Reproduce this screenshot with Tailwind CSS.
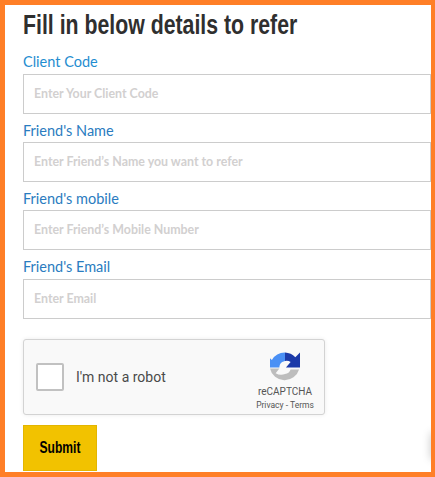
<!DOCTYPE html>
<html lang="en">
<head>
  <meta charset="UTF-8" />
  <title>Refer a friend</title>
  <script src="https://cdn.jsdelivr.net/npm/@tailwindcss/browser@4"></script>
</head>
<body class="bg-white">
  <div class="w-[435px] h-[477px] overflow-hidden border-[5px] border-r-[4px] border-[#ff7f27] bg-white pl-[18px] relative font-['Lato',sans-serif]">
    <h2 class="h-[43px] pt-[3px] whitespace-nowrap origin-left scale-x-[0.76] text-[28px] leading-[34px] font-bold text-[#2f2f2f] font-['Liberation_Sans',sans-serif]">Fill in below details to refer</h2>

    <form>
      <label class="block h-[26px] pt-[4px] text-[14.5px] leading-[20px] text-[#1f8dd0]">Client Code</label>
      <input type="text" placeholder="Enter Your Client Code" class="block w-[408px] h-[40px] border border-[#cccccc] px-[10px] pb-[2px] text-[12.4px] font-bold placeholder:text-[#d2d0d0] outline-none" />

      <label class="block h-[28px] pt-[7px] text-[14.5px] leading-[20px] text-[#2a7cc0]">Friend's Name</label>
      <input type="text" placeholder="Enter Friend’s Name you want to refer" class="block w-[408px] h-[40px] border border-[#cccccc] px-[10px] pb-[2px] text-[12.4px] font-bold placeholder:text-[#d2d0d0] outline-none" />

      <label class="block h-[28px] pt-[7px] text-[14.5px] leading-[20px] text-[#2a7cc0]">Friend's mobile</label>
      <input type="text" placeholder="Enter Friend’s Mobile Number" class="block w-[408px] h-[40px] border border-[#cccccc] px-[10px] pb-[2px] text-[12.4px] font-bold placeholder:text-[#d2d0d0] outline-none" />

      <label class="block h-[29px] pt-[7px] text-[14.5px] leading-[20px] text-[#2a7cc0]">Friend's Email</label>
      <input type="text" placeholder="Enter Email" class="block w-[408px] h-[40px] border border-[#cccccc] px-[10px] pb-[2px] text-[12.4px] font-bold placeholder:text-[#d2d0d0] outline-none" />

      <!-- recaptcha -->
      <div class="mt-[20px] w-[302px] h-[76px] flex items-center rounded-[3px] border border-[#d3d3d3] bg-[#f9f9f9] shadow-[0_0_4px_rgba(0,0,0,0.08)] font-['Roboto',sans-serif]">
        <div class="ml-[12px] w-[28px] h-[28px] rounded-[2px] border-2 border-[#c1c1c1] bg-white"></div>
        <span class="ml-[12px] text-[14px] text-[#4a4a4a]">I'm not a robot</span>
        <div class="ml-auto mr-[9px] w-[60px] flex flex-col items-center pt-[8px]">
          <svg width="30" height="31" viewBox="0 0 32 32">
            <path d="M16 0 A16 16 0 0 0 2 8 L0 6 L0 16 L10 16 A7 7 0 0 1 13 10 L16 9 Z" fill="#4a90f5" />
            <path d="M16 0 A16 16 0 0 1 27 5 L32 0 L32 16 L17 16 L22 10 A8 8 0 0 0 16 9 Z" fill="#1c3aa9" />
            <path d="M0 17 L10 17 L6 22 A11 11 0 0 0 16 23 A8 8 0 0 0 22 18 L31 18 A16 16 0 0 1 0 17 Z" fill="#bdbdbd" />
          </svg>
          <span class="mt-[2px] text-[10px] leading-[13px] text-[#555555]">reCAPTCHA</span>
          <span class="mt-[1px] whitespace-nowrap text-[8.5px] leading-[12px] text-[#555555]">Privacy - Terms</span>
        </div>
      </div>

      <button type="button" class="mt-[10px] block w-[74px] h-[46px] border border-[#e3b500] bg-[#f2c200] text-black">
        <span class="block scale-x-[0.71] text-[17px] font-bold font-['Liberation_Sans',sans-serif]">Submit</span>
      </button>
    </form>

    <!-- faint shadow at the right edge -->
    <div class="absolute right-[-6px] top-[428px] w-[6px] h-[26px] shadow-[0_0_8px_rgba(0,0,0,0.25)]"></div>
  </div>
</body>
</html>
